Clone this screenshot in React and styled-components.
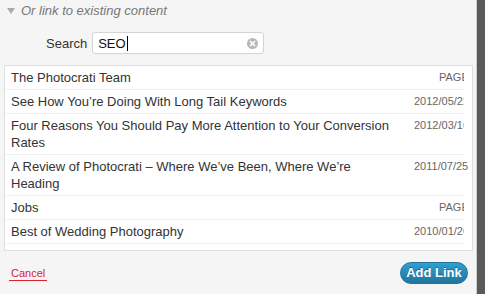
import React from 'react'
import styled, { createGlobalStyle } from 'styled-components'

const GlobalStyle = createGlobalStyle`
  body {
    margin: 0;
    font-family: "Liberation Sans", Arial, sans-serif;
    background: #5a5a5a;
  }
`

const items = [
  { title: 'The Photocrati Team', info: 'Page', page: true },
  { title: 'See How You’re Doing With Long Tail Keywords', info: '2012/05/22' },
  { title: 'Four Reasons You Should Pay More Attention to Your Conversion Rates', info: '2012/03/16' },
  { title: 'A Review of Photocrati – Where We’ve Been, Where We’re Heading', info: '2011/07/25', full: true },
  { title: 'Jobs', info: 'Page', page: true },
  { title: 'Best of Wedding Photography', info: '2010/01/26' },
  { title: 'Wedding Photography Tips', info: '2009/11/02' },
]

const Screen = styled.div`
  display: flex;
  height: 294px;
  width: 485px;
`

const Dialog = styled.div`
  width: 476px;
  height: 294px;
  background: #f5f5f5;
  border-right: 1px solid #cfcfcf;
  display: flex;
  flex-direction: column;
  flex: none;
`

const Backdrop = styled.div`
  flex: 1;
  background: #5a5a5a;
`

const Toggle = styled.div`
  display: flex;
  align-items: center;
  height: 18px;
  padding: 1px 0 0 7px;
  color: #777;
  font-size: 13px;
  font-style: italic;
`

const Arrow = styled.span`
  width: 0;
  height: 0;
  border-left: 4px solid transparent;
  border-right: 4px solid transparent;
  border-top: 6px solid #aaa;
  margin: 1px 6px 0 0;
`

const SearchRow = styled.div`
  display: flex;
  align-items: center;
  margin-top: 13px;
  padding-left: 46px;
  font-size: 13px;
  color: #333;
`

const Label = styled.span`
  margin-right: 5px;
`

const Field = styled.div`
  position: relative;
  box-sizing: border-box;
  width: 172px;
  height: 22px;
  border: 1px solid #d4d4d4;
  border-radius: 3px;
  background: #fff;
  display: flex;
  align-items: center;
  padding-left: 5px;
  color: #111;
  font-size: 13px;
`

const Caret = styled.span`
  display: inline-block;
  width: 1px;
  height: 15px;
  background: #000;
  margin-left: 1px;
`

const Clear = styled.span`
  position: absolute;
  right: 5px;
  top: 5px;
  width: 11px;
  height: 11px;
  border-radius: 50%;
  background: #b8b8b8;
  display: flex;
  align-items: center;
  justify-content: center;
`

const List = styled.div`
  margin: 11px 0 0 4px;
  width: 469px;
  height: 186px;
  box-sizing: border-box;
  border: 1px solid #dfdfdf;
  background: #fff;
  overflow: hidden;
`

const Row = styled.div`
  width: 459px;
  box-sizing: border-box;
  display: flex;
  align-items: flex-start;
  padding: 3px 0 3px 6px;
  border-bottom: 1px solid #f0f0f0;
  font-size: 13px;
  line-height: 17px;
  color: #333;
`

const Title = styled.span`
  width: 384px;
  flex: none;
`

const Info = styled.span`
  margin-left: auto;
  flex: none;
  width: ${p => (p.$full ? 56 : 50)}px;
  margin-right: ${p => (p.$full ? -6 : 0)}px;
  box-sizing: border-box;
  padding-left: ${p => (p.$page ? 25 : 0)}px;
  overflow: hidden;
  white-space: nowrap;
  font-size: 11px;
  color: #666;
  text-transform: uppercase;
`

const Footer = styled.div`
  flex: 1;
  display: flex;
  align-items: center;
  justify-content: space-between;
  padding: 0 8px 0 9px;
`

const Cancel = styled.a`
  color: #d9232f;
  font-size: 11px;
  text-decoration: none;
  padding: 0 2px 1px;
  border-bottom: 1px solid #d9232f;
  margin-top: 2px;
`

const AddButton = styled.button`
  box-sizing: border-box;
  width: 68px;
  height: 22px;
  border: 1px solid #21759b;
  border-radius: 11px;
  background: linear-gradient(#2e9fd2, #21759b);
  color: #fff;
  font-family: "Liberation Sans", Arial, sans-serif;
  font-size: 13px;
  font-weight: bold;
  text-shadow: 0 -1px 0 rgba(0, 0, 0, 0.3);
  padding: 0;
`

export default function App () {
  return (
    <Screen>
      <GlobalStyle />
      <Dialog>
        <Toggle><Arrow />Or link to existing content</Toggle>
        <SearchRow>
          <Label>Search</Label>
          <Field>
            SEO<Caret />
            <Clear>
              <svg width="7" height="7" viewBox="0 0 7 7">
                <path d="M1 1L6 6M6 1L1 6" stroke="#fff" strokeWidth="1.6" />
              </svg>
            </Clear>
          </Field>
        </SearchRow>
        <List>
          {items.map((item, index) => (
            <Row key={index}>
              <Title>{item.title}</Title>
              <Info $page={item.page} $full={item.full}>{item.info}</Info>
            </Row>
          ))}
        </List>
        <Footer>
          <Cancel href="#">Cancel</Cancel>
          <AddButton>Add Link</AddButton>
        </Footer>
      </Dialog>
      <Backdrop />
    </Screen>
  )
}
